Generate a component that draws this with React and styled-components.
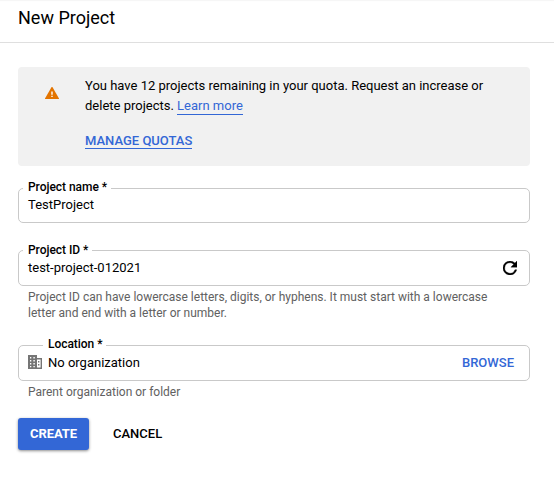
import React from "react";
import styled, { createGlobalStyle } from "styled-components";

const GlobalStyle = createGlobalStyle`
  * { box-sizing: border-box; }
  body {
    margin: 0;
    background: #fff;
    color: #000;
    font-family: Roboto, "Liberation Sans", sans-serif;
    font-size: 13px;
  }
`;

const Page = styled.main`
  height: 479px;
  overflow: hidden;
  box-shadow: inset 0 2px 1px -1px #f6f6f6;
`;

const Header = styled.header`
  height: 43px;
  padding: 6px 18px 0;
  border-bottom: 1px solid #dfdfdf;
`;

const Title = styled.h1`
  margin: 0;
  font-size: 18px;
  font-weight: 400;
  line-height: 24px;
`;

const Form = styled.form`
  display: flex;
  flex-direction: column;
  padding: 24px 24px 0 18px;
`;

const Notice = styled.section`
  display: flex;
  height: 99px;
  padding: 9px 20px 0 27px;
  border-radius: 4px;
  background: #f1f1f1;
`;

const NoticeIcon = styled.svg`
  flex: none;
  width: 14px;
  height: 12px;
  margin: 11px 26px 0 0;
`;

const NoticeText = styled.p`
  margin: 0 0 16px;
  line-height: 20px;
`;

const Link = styled.a`
  display: inline-block;
  color: #3367d6;
  padding-top: ${(p) => (p.$strong ? 1 : 0)}px;
  line-height: ${(p) => (p.$strong ? 15 : 16)}px;
  border-bottom: 1px solid #3367d6;
  font-weight: ${(p) => (p.$strong ? 500 : 400)};
`;

const Field = styled.div`
  position: relative;
  display: flex;
  align-items: center;
  height: ${(p) => p.$height || 36}px;
  margin-top: ${(p) => p.$gap}px;
  padding: 0 15px 0 9px;
  border: 1px solid #c9c9c9;
  border-radius: 5px;
`;

const Label = styled.label`
  position: absolute;
  top: ${(p) => p.$top || -10}px;
  left: ${(p) => p.$left || 4}px;
  padding: 0 4px 0 5px;
  background: #fff;
  font-size: 12px;
  font-weight: 500;
  line-height: 16px;
  letter-spacing: -0.04px;
`;

const Value = styled.span`
  flex: 1;
  line-height: 16px;
  padding-bottom: 1px;
`;

const Hint = styled.p`
  margin: 3px 10px 0;
  color: #616161;
  font-size: 12px;
  line-height: 16px;
`;

const BuildingIcon = styled.svg`
  flex: none;
  width: 14px;
  height: 14px;
  margin: 0 6px 2px 0;
  fill: #757575;
`;

const RefreshIcon = styled.svg`
  width: 14px;
  height: 14px;
  margin-right: -3px;
  stroke: #000;
  stroke-width: 0.4;
`;

const TextButton = styled.button`
  padding: 0;
  border: 0;
  background: none;
  color: ${(p) => p.$color};
  font: 500 13px/16px Roboto, sans-serif;
`;

const CreateButton = styled(TextButton)`
  width: 71px;
  height: 32px;
  border-radius: 3px;
  background: #3367d6;
  font-weight: 700;
  letter-spacing: -0.08px;
  box-shadow: 0 1px 3px rgba(0, 0, 0, 0.45);
`;

const Actions = styled.div`
  display: flex;
  align-items: center;
  gap: 24px;
  margin-top: 18px;
`;

export default function App() {
  return (
    <Page>
      <GlobalStyle />
      <Header>
        <Title>New Project</Title>
      </Header>
      <Form>
        <Notice>
          <NoticeIcon viewBox="0 0 14 12">
            <path fill="#e37400" d="M6.6 0H7.4L14 11.5V12H0V11.5Z" />
            <path fill="#fff" d="M6.3 4.6h1.4v3.2H6.3zM6.3 8.7h1.4v1.3H6.3z" />
          </NoticeIcon>
          <div>
            <NoticeText>
              You have 12 projects remaining in your quota. Request an increase or
              <br />
              delete projects. <Link>Learn more</Link>
            </NoticeText>
            <Link $strong>MANAGE QUOTAS</Link>
          </div>
        </Notice>

        <Field $gap={22} $height={35}>
          <Label>Project name *</Label>
          <Value>TestProject</Value>
        </Field>

        <Field $gap={27}>
          <Label $top={-9}>Project ID *</Label>
          <Value>test-project-012021</Value>
          <RefreshIcon viewBox="4 4 16 16">
            <path d="M17.65 6.35A7.958 7.958 0 0 0 12 4a8 8 0 1 0 7.73 10h-2.08A6 6 0 1 1 12 6c1.66 0 3.14.69 4.22 1.78L13 11h7V4l-2.35 2.35z" />
          </RefreshIcon>
        </Field>
        <Hint>
          Project ID can have lowercase letters, digits, or hyphens. It must start with a lowercase
          <br />
          letter and end with a letter or number.
        </Hint>

        <Field $gap={24}>
          <Label $left={24}>Location *</Label>
          <BuildingIcon viewBox="0 0 14 14">
            <path
              fillRule="evenodd"
              d="M0 0h9v3h5v11H0zM2 2v1.4h1.3V2zM5.4 2v1.4h1.4V2zM2 5v1.5h1.3V5zM5.4 5v1.5h1.4V5zM2 8v1.5h1.3V8zM5.4 8v1.5h1.4V8zM2 11v1.3h1.3V11zM5.4 11v1.3h1.4V11zM9 4.5v8h3.6v-8zM10 6h1.4v1.4H10zM10 9h1.4v1.4H10z"
            />
          </BuildingIcon>
          <Value>No organization</Value>
          <TextButton type="button" $color="#3367d6">BROWSE</TextButton>
        </Field>
        <Hint>Parent organization or folder</Hint>

        <Actions>
          <CreateButton type="button" $color="#fff">CREATE</CreateButton>
          <TextButton type="button" $color="#000">CANCEL</TextButton>
        </Actions>
      </Form>
    </Page>
  );
}
